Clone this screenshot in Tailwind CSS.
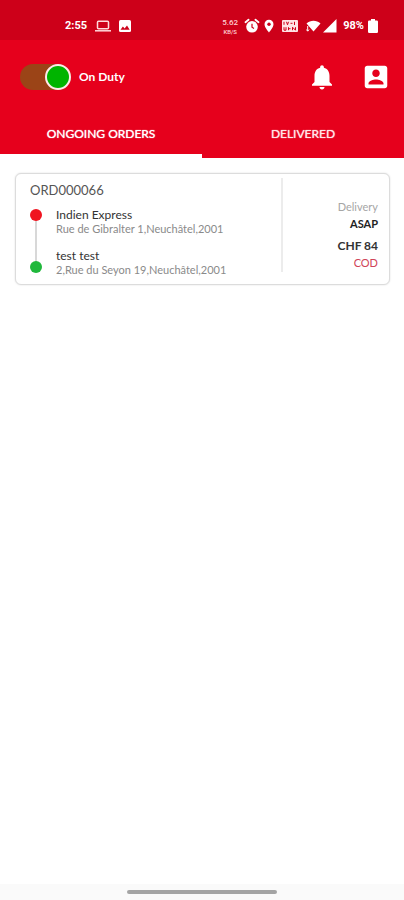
<!DOCTYPE html>
<html lang="en">
<head>
<meta charset="utf-8">
<meta name="viewport" content="width=device-width, initial-scale=1">
<title>Ongoing orders</title>
<script src="https://cdn.jsdelivr.net/npm/@tailwindcss/browser@4"></script>
</head>
<body class="flex min-h-screen flex-col bg-white font-['Lato',sans-serif] text-[#444]">
<div class="flex h-10 items-center justify-between bg-[#cd0019] pr-[26px] pl-[65px] pt-3 font-['Roboto',sans-serif] text-[11px] font-bold text-white">
  <div class="flex items-center gap-2">
    <span>2:55</span>
    <svg class="h-3 w-4" viewBox="0 0 16 12" fill="none" stroke="#ffd9dc" stroke-width="1.5" aria-hidden="true"><rect x="2.5" y="1.2" width="11" height="7.6" rx="1"/><path d="M0 10.8h16"/></svg>
    <svg class="h-3 w-3" viewBox="0 0 12 12" aria-hidden="true"><rect width="12" height="12" rx="1.5" fill="#fff"/><path d="M1.5 9.8l2.400-3.200 1.700 2L8 5.400l2.700 4.400z" fill="#cd0019"/></svg>
  </div>
  <div class="flex items-center">
    <span class="mr-1 flex w-5 flex-col items-center font-medium text-[#ffd0d4]"><span class="text-[8px] leading-[10px]">5.62</span><span class="text-[6px] leading-[7px]">KB/S</span></span>
    <svg class="mr-1 h-4 w-4" viewBox="0 0 16 16" aria-hidden="true"><circle cx="8" cy="8.800" r="5.800" fill="#fff"/><path d="M1.500 4.200l3-2.500M14.500 4.200l-3-2.500" stroke="#fff" stroke-width="1.800" stroke-linecap="round"/><path d="M8 5.800v3.400l2 1.200" stroke="#cd0019" stroke-width="1.200" fill="none"/></svg>
    <svg class="mr-2 h-[14px] w-[10px]" viewBox="0 0 10 14" aria-hidden="true"><path d="M5 .8a4.500 4.500 0 0 0-4.500 4.500C.5 8.600 5 13.400 5 13.400s4.500-4.800 4.500-8.100A4.500 4.500 0 0 0 5 .8z" fill="#fff"/><circle cx="5" cy="5.200" r="1.700" fill="#cd0019"/></svg>
    <svg class="mr-2 h-3 w-4" viewBox="0 0 16 12" aria-hidden="true"><rect width="16" height="12" rx="1" fill="#ffe3e5"/><path d="M2 1.800v3M4.500 1.800l1 3 1-3M8.500 3.300h2M12.500 1.800v3.200M2 7.200v3h2v-3M6.500 7.200v3M6.500 8.700h2M10.500 10.200v-3l3 3v-3" stroke="#cd0019" stroke-width="1" fill="none"/></svg>
    <svg class="h-3 w-[15px]" viewBox="0 0 15 12" aria-hidden="true"><path d="M.5 3.500C4.500-.2 10.500-.2 14.500 3.500L7.500 11.600z" fill="#fff"/><path d="M1.700 6v5M.3 9.500l1.400 1.700 1.400-1.700" stroke="#fff" fill="none"/></svg>
    <svg class="mr-1.5 ml-0.5 h-[14px] w-[14px]" viewBox="0 0 14 14" aria-hidden="true"><path d="M0 13.500L13.500 0v13.500z" fill="#fff"/></svg>
    <span>98%</span>
    <svg class="ml-1 h-[14px] w-[10px]" viewBox="0 0 10 14" aria-hidden="true"><path d="M3 0h4v1.500h1.800q1.200 0 1.200 1.200v10q0 1.300-1.200 1.300H1.200Q0 14 0 12.700v-10q0-1.200 1.200-1.200H3z" fill="#fff"/></svg>
  </div>
</div>
<header class="bg-[#e6001c] text-white">
  <div class="flex h-[74px] items-center pr-[13px] pl-5">
    <label class="flex items-center gap-2 text-[12px] font-bold">
      <input type="checkbox" role="switch" checked class="h-[26px] w-[51px] appearance-none rounded-full bg-[#9b4417] before:ml-auto before:block before:h-[26px] before:w-[26px] before:rounded-full before:border-2 before:border-[#ffe9e9] before:bg-[#00b400]">
      <span>On Duty</span>
    </label>
    <button type="button" aria-label="Notifications" class="mr-6 ml-auto">
      <svg class="h-[30px] w-[30px]" viewBox="0 0 24 24" fill="#fff"><path d="M12 22c1.100 0 2-.9 2-2h-4c0 1.100.890 2 2 2zm6-6v-5c0-3.070-1.640-5.640-4.500-6.320V4c0-.830-.670-1.500-1.500-1.500s-1.500.670-1.500 1.500v.680C7.630 5.360 6 7.920 6 11v5l-2 2v1h16v-1l-2-2z"/></svg>
    </button>
    <button type="button" aria-label="Account">
      <svg class="h-[30px] w-[30px]" viewBox="0 0 24 24" fill="#fff"><path d="M3 5v14c0 1.100.890 2 2 2h14c1.100 0 2-.9 2-2V5c0-1.100-.9-2-2-2H5c-1.110 0-2 .9-2 2zm12 4c0 1.660-1.340 3-3 3s-3-1.340-3-3 1.340-3 3-3 3 1.340 3 3zm-9 8c0-2 4-3.100 6-3.100s6 1.100 6 3.100v1H6v-1z"/></svg>
    </button>
  </div>
  <nav class="grid h-11 grid-cols-2 text-[12px]">
    <a href="#ongoing" aria-current="page" class="flex items-center justify-center border-b-4 border-white text-shadow-[0_0_1px_#fff]">ONGOING ORDERS</a>
    <a href="#delivered" class="flex items-center justify-center border-b-4 border-transparent text-[#ffe5e7] text-shadow-[0_0_1px_#ffe5e7]">DELIVERED</a>
  </nav>
</header>
<main id="ongoing" class="flex-1 pt-[15px] pr-[14px] pl-[15px]">
  <article class="flex rounded-md border border-[#dcdcdc] bg-white shadow-[0_0_2px_#ddd]">
    <div class="min-w-0 flex-1 pt-[6px] pb-2 pl-[14px]">
      <h2 class="text-[13px] leading-5 text-[#555]">ORD000066</h2>
      <div class="mt-2 flex gap-[14px]">
        <svg class="mt-px h-[64px] w-3 shrink-0" viewBox="0 0 12 64" aria-hidden="true"><path d="M6 6v52" stroke="#d8d8d8" stroke-width="2"/><circle cx="6" cy="6" r="6" fill="#f01420"/><circle cx="6" cy="58" r="6" fill="#20b83c"/></svg>
        <div class="flex flex-col gap-[14px]">
          <div>
            <p class="text-[12px] leading-[14px] text-[#333]">Indien Express</p>
            <p class="text-[11px] leading-[13px] text-[#8a8a8a]">Rue de Gibralter 1,Neuchâtel,2001</p>
          </div>
          <div>
            <p class="text-[12px] leading-[14px] text-[#333]">test test</p>
            <p class="text-[11px] leading-[13px] text-[#8a8a8a]">2,Rue du Seyon 19,Neuchâtel,2001</p>
          </div>
        </div>
      </div>
    </div>
    <div class="mt-1 mb-3 w-[108px] border-l-2 border-[#ececec] pt-5 pr-[11px] text-right text-[11px] leading-[17px]">
      <p class="text-[#a6a6a6]">Delivery</p>
      <p class="font-bold text-[#222]">ASAP</p>
      <p class="mt-[5px] text-[12px] font-bold text-[#333]">CHF 84</p>
      <p class="text-[#d04458]">COD</p>
    </div>
  </article>
</main>
<footer class="flex h-4 items-center justify-center bg-[#fafafa]">
  <div class="h-1 w-[37%] rounded-full bg-[#a4a4a4]"></div>
</footer>
</body>
</html>
